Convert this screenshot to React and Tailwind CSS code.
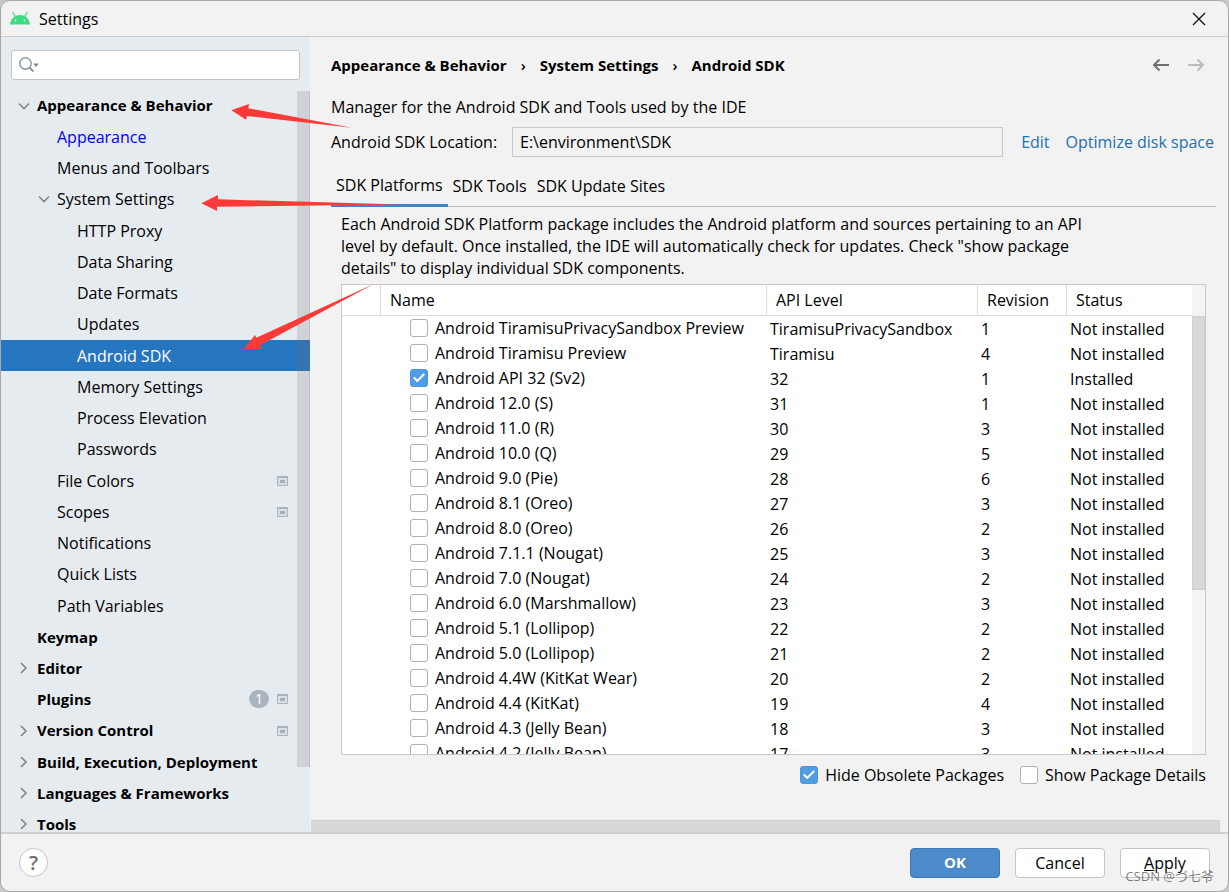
import { useState } from "react";
import { Check } from "lucide-react";

const tree = [
  { label: "Appearance & Behavior", level: 0, open: true },
  { label: "Appearance", level: 1, modified: true },
  { label: "Menus and Toolbars", level: 1 },
  { label: "System Settings", level: 1, open: true },
  { label: "HTTP Proxy", level: 2 },
  { label: "Data Sharing", level: 2 },
  { label: "Date Formats", level: 2 },
  { label: "Updates", level: 2 },
  { label: "Android SDK", level: 2, selected: true },
  { label: "Memory Settings", level: 2 },
  { label: "Process Elevation", level: 2 },
  { label: "Passwords", level: 2 },
  { label: "File Colors", level: 1, project: true },
  { label: "Scopes", level: 1, project: true },
  { label: "Notifications", level: 1 },
  { label: "Quick Lists", level: 1 },
  { label: "Path Variables", level: 1 },
  { label: "Keymap", level: 0 },
  { label: "Editor", level: 0, open: false },
  { label: "Plugins", level: 0, project: true, count: 1 },
  { label: "Version Control", level: 0, open: false, project: true },
  { label: "Build, Execution, Deployment", level: 0, open: false },
  { label: "Languages & Frameworks", level: 0, open: false },
  { label: "Tools", level: 0, open: false },
];

const platforms = [
  ["Android TiramisuPrivacySandbox Preview", "TiramisuPrivacySandbox", "1"],
  ["Android Tiramisu Preview", "Tiramisu", "4"],
  ["Android API 32 (Sv2)", "32", "1", true],
  ["Android 12.0 (S)", "31", "1"],
  ["Android 11.0 (R)", "30", "3"],
  ["Android 10.0 (Q)", "29", "5"],
  ["Android 9.0 (Pie)", "28", "6"],
  ["Android 8.1 (Oreo)", "27", "3"],
  ["Android 8.0 (Oreo)", "26", "2"],
  ["Android 7.1.1 (Nougat)", "25", "3"],
  ["Android 7.0 (Nougat)", "24", "2"],
  ["Android 6.0 (Marshmallow)", "23", "3"],
  ["Android 5.1 (Lollipop)", "22", "2"],
  ["Android 5.0 (Lollipop)", "21", "2"],
  ["Android 4.4W (KitKat Wear)", "20", "2"],
  ["Android 4.4 (KitKat)", "19", "4"],
  ["Android 4.3 (Jelly Bean)", "18", "3"],
  ["Android 4.2 (Jelly Bean)", "17", "3"],
];

const indents = ["pl-[16px]", "pl-[36px]", "pl-[56px]"];

const bold = "text-[15px] font-bold";

function AndroidLogo() {
  return (
    <svg width="20" height="13" viewBox="0 0 20 13" aria-hidden="true">
      <path d="M5.300 4.600L3 .7M14.700 4.600L17 .7" stroke="#3ddc84" strokeWidth="1.200" fill="none" strokeLinecap="round" />
      <path d="M0 12.500C.5 6.900 4.500 3 10 3s9.500 3.900 10 9.500z" fill="#3ddc84" />
      <circle cx="5.500" cy="8.500" r=".9" fill="#fff" />
      <circle cx="14.500" cy="8.500" r=".9" fill="#fff" />
    </svg>
  );
}

function Chevron({ open }) {
  return (
    <svg width="12" height="12" viewBox="0 0 12 12" fill="none" stroke="#7f8689" strokeWidth="1.600" aria-hidden="true">
      <path d={open ? "M1 3.500l5 5 5-5" : "M3 1l5 5-5 5"} />
    </svg>
  );
}

function ProjectIcon() {
  return (
    <svg width="11" height="10" viewBox="0 0 11 10" aria-hidden="true">
      <path d="M.5 .5h10v9H.5z" fill="#d9e0e5" stroke="#a9b5bd" />
      <path d="M0 0h11v2H0z" fill="#a9b5bd" />
      <path d="M3 4h5v3H3z" fill="#a3b0b8" />
    </svg>
  );
}

function TreeRow({ item }) {
  const tone = item.selected ? "text-white" : item.modified ? "text-[#0000ff]" : "text-black";
  return (
    <li className={`flex items-center ${indents[item.level]} ${item.selected ? "bg-[#2675bf]" : ""}`}>
      <a href="#" className={`flex flex-1 items-center whitespace-nowrap ${tone} ${item.level === 0 ? bold : ""}`}>
        <span className="flex w-5 items-center pl-px">{item.open !== undefined && <Chevron open={item.open} />}</span>
        {item.label}
      </a>
      <span className="flex items-center gap-2 pr-[22px]">
        {item.count && (
          <span className="flex h-[18px] w-5 items-center justify-center rounded-full bg-[#a9b5bd] text-sm text-white">{item.count}</span>
        )}
        {item.project && <ProjectIcon />}
      </span>
    </li>
  );
}

function Checkbox({ checked, label, gap = "gap-[7px]" }) {
  const [on, setOn] = useState(!!checked);
  return (
    <label className={`flex items-center whitespace-nowrap ${gap}`}>
      <span className="grid shrink-0 place-items-center">
        <input
          type="checkbox"
          checked={on}
          onChange={(e) => setOn(e.target.checked)}
          className="col-start-1 row-start-1 size-[18px] appearance-none rounded-[3px] border border-[#b0b0b0] bg-white checked:border-[#4a95dc] checked:bg-[#4f9ee3]"
        />
        {on && <Check size={14} strokeWidth={3.5} className="pointer-events-none col-start-1 row-start-1 text-white" />}
      </span>
      {label}
    </label>
  );
}

function Sidebar() {
  return (
    <aside className="flex w-[309px] shrink-0 flex-col bg-[#e6ebf0]">
      <div className="px-[10px] pt-[13px] pb-[10px]">
        <label className="flex h-[30px] items-center rounded-[3px] border border-[#c0c4c7] bg-white pl-[7px]">
          <svg width="20" height="16" viewBox="0 0 20 16" fill="none" aria-hidden="true">
            <circle cx="6.500" cy="6.500" r="5.700" stroke="#8c979e" strokeWidth="1.500" />
            <path d="M10.500 10.500l4 4" stroke="#8c979e" strokeWidth="2" />
            <path d="M14 6.500h6l-3 3.500z" fill="#7f8b91" />
          </svg>
          <input type="search" aria-label="Search settings" className="min-w-0 flex-1 bg-transparent pl-1 outline-none" />
        </label>
      </div>
      <nav aria-label="Settings pages" className="relative min-h-0 flex-1 overflow-hidden">
        <ul className="grid min-h-[750px] auto-rows-fr">
          {tree.map((item) => (
            <TreeRow key={item.label} item={item} />
          ))}
        </ul>
        <div className="absolute top-px right-0 h-[676px] w-[13px] border-r border-[#737373]/20 bg-[#737373]/20" />
      </nav>
    </aside>
  );
}

function PlatformTable() {
  const head = "border-l border-[#dcdcdc] pl-[9px] text-left font-normal";
  const cell = "p-0 pt-0.5 pl-1 leading-[23px]";
  return (
    <div className="flex min-h-0 flex-1 overflow-hidden border border-[#c9c9c9] bg-white">
      <div className="min-w-0 flex-1">
        <table className="w-full table-fixed border-separate border-spacing-0">
          <colgroup>
            <col className="w-[38px]" />
            <col />
            <col className="w-[211px]" />
            <col className="w-[89px]" />
            <col className="w-[126px]" />
          </colgroup>
          <thead>
            <tr className="h-[31px]">
              <th aria-label="Expand" className="border-b border-[#dcdcdc]" />
              <th className={`${head} border-b`}>Name</th>
              <th className={`${head} border-b`}>API Level</th>
              <th className={`${head} border-b`}>Revision</th>
              <th className={`${head} border-b`}>Status</th>
            </tr>
          </thead>
          <tbody>
            {platforms.map(([name, api, revision, installed]) => (
              <tr key={name} className="h-[25px]">
                <td className="p-0" />
                <td className="p-0 pl-[30px] align-top leading-6">
                  <Checkbox checked={installed} label={name} />
                </td>
                <td className={cell}>{api}</td>
                <td className={cell}>{revision}</td>
                <td className={cell}>{installed ? "Installed" : "Not installed"}</td>
              </tr>
            ))}
          </tbody>
        </table>
      </div>
      <div className="w-[13px] bg-[#f4f4f4] pt-[31px]">
        <div className="h-[274px] border border-[#cfcfcf] bg-[#d9d9d9]" />
      </div>
    </div>
  );
}

function Content() {
  const [path, setPath] = useState("E:\\environment\\SDK");
  return (
    <main className="flex min-w-0 flex-1 flex-col">
      <div className="flex min-h-0 flex-1 flex-col pt-[16px] pl-[21px]">
        <div className="flex h-6 items-center justify-between pr-[23px]">
          <nav aria-label="Breadcrumb" className={`flex items-center gap-[14px] ${bold}`}>
            <span>Appearance &amp; Behavior</span>
            <span className="font-semibold">›</span>
            <span>System Settings</span>
            <span className="font-semibold">›</span>
            <span>Android SDK</span>
          </nav>
          <div className="flex gap-[17px]">
            <button aria-label="Back">
              <svg width="18" height="14" viewBox="0 0 18 14" fill="none" stroke="#6e6e6e" strokeWidth="2"><path d="M17 7H2M7.500 1.500L2 7l5.500 5.500" /></svg>
            </button>
            <button aria-label="Forward">
              <svg width="18" height="14" viewBox="0 0 18 14" fill="none" stroke="#bcbcbc" strokeWidth="2"><path d="M1 7h15M10.500 1.500L16 7l-5.500 5.500" /></svg>
            </button>
          </div>
        </div>
        <p className="mt-[18px] leading-6">Manager for the Android SDK and Tools used by the IDE</p>
        <div className="mt-2 flex items-center pr-[14px]">
          <label htmlFor="sdk-location" className="w-[181px] shrink-0">Android SDK Location:</label>
          <input id="sdk-location" value={path} onChange={(e) => setPath(e.target.value)} className="h-[30px] min-w-0 flex-1 border border-[#c9c9c9] bg-[#f2f2f2] px-[7px] outline-none" />
          <a href="#" className="ml-[18px] text-[#2470b3]">Edit</a>
          <a href="#" className="ml-4 whitespace-nowrap text-[#2470b3]">Optimize disk space</a>
        </div>
        <div role="tablist" className="mt-2 mr-[12px] flex h-[42px] border-b border-[#bdbdbd]">
          <button role="tab" aria-selected="true" className="-mb-px border-b-[3px] border-[#4083c9] px-[5px] pt-px">SDK Platforms</button>
          <button role="tab" aria-selected="false" className="px-[5px]">SDK Tools</button>
          <button role="tab" aria-selected="false" className="px-[5px]">SDK Update Sites</button>
        </div>
        <section className="flex min-h-0 flex-1 flex-col pr-[22px] pl-[10px]">
          <p className="mt-[6px] mb-[5px] max-w-[765px] leading-[22px]">
            Each Android SDK Platform package includes the Android platform and sources pertaining to an API level by default. Once installed, the IDE will automatically check for updates. Check "show package details" to display individual SDK components.
          </p>
          <PlatformTable />
          <div className="mt-2 mb-[33px] flex justify-end gap-4 leading-6">
            <Checkbox checked label="Hide Obsolete Packages" />
            <Checkbox label="Show Package Details" />
          </div>
        </section>
      </div>
      <div className="mr-2 ml-px h-3 border-t border-r border-[#cfcfcf] bg-[#d8d8d8]" />
    </main>
  );
}

function Arrows() {
  return (
    <svg className="pointer-events-none absolute top-0 left-0" width="420" height="360" viewBox="0 0 420 360" fill="#fd3a37" aria-hidden="true">
      <path d="M231.300 110.300L249 104l-.7 4.300L351.700 127.700 247 116l-1 3.700z" />
      <path d="M201.300 203.300L218 195v4.300L401.700 204.500 217 206.700V211z" />
      <path d="M243.700 349L255 335l1.300 2.700L374.300 283.700 260 345.300l2 3.700z" />
    </svg>
  );
}

export default function App() {
  const button = "h-[30px] w-[90px] rounded-[4px] border";
  return (
    <div className="h-screen bg-[#c8c8c8] font-['Open_Sans','Noto_Sans_CJK_SC',sans-serif] text-base text-black">
      <div className="relative flex h-full flex-col overflow-hidden rounded-[10px] border border-[#a8a8a8] bg-[#f2f2f2]">
        <header className="flex h-9 shrink-0 items-center justify-between border-b border-[#cccccc] pr-[22px] pl-[9px]">
          <h1 className="flex items-center gap-[9px]">
            <AndroidLogo />
            Settings
          </h1>
          <button aria-label="Close">
            <svg width="14" height="14" viewBox="0 0 14 14" stroke="#111" strokeWidth="1.300"><path d="M1 1l12 12M13 1L1 13" /></svg>
          </button>
        </header>
        <div className="flex min-h-0 flex-1">
          <Sidebar />
          <Content />
        </div>
        <footer className="flex h-[59px] shrink-0 items-center gap-[15px] border-t-2 border-[#cfcfcf] pr-[18px] pl-[18px]">
          <button aria-label="Help" className="mr-auto flex size-[29px] items-center justify-center rounded-full border border-[#c4c4c4] bg-white text-xl font-semibold text-[#6e6e6e]">?</button>
          <button className={`${button} ${bold} border-[#4177b5] bg-[#4d8ac9] text-white`}>OK</button>
          <button className={`${button} border-[#c4c4c4] bg-white`}>Cancel</button>
          <button className={`${button} border-[#c4c4c4] bg-white`}><span className="underline">A</span>pply</button>
        </footer>
        <span className="pointer-events-none absolute right-[14px] bottom-[5px] text-[13px] leading-5 text-black/50">CSDN @づ七爷</span>
      </div>
      <Arrows />
    </div>
  );
}
